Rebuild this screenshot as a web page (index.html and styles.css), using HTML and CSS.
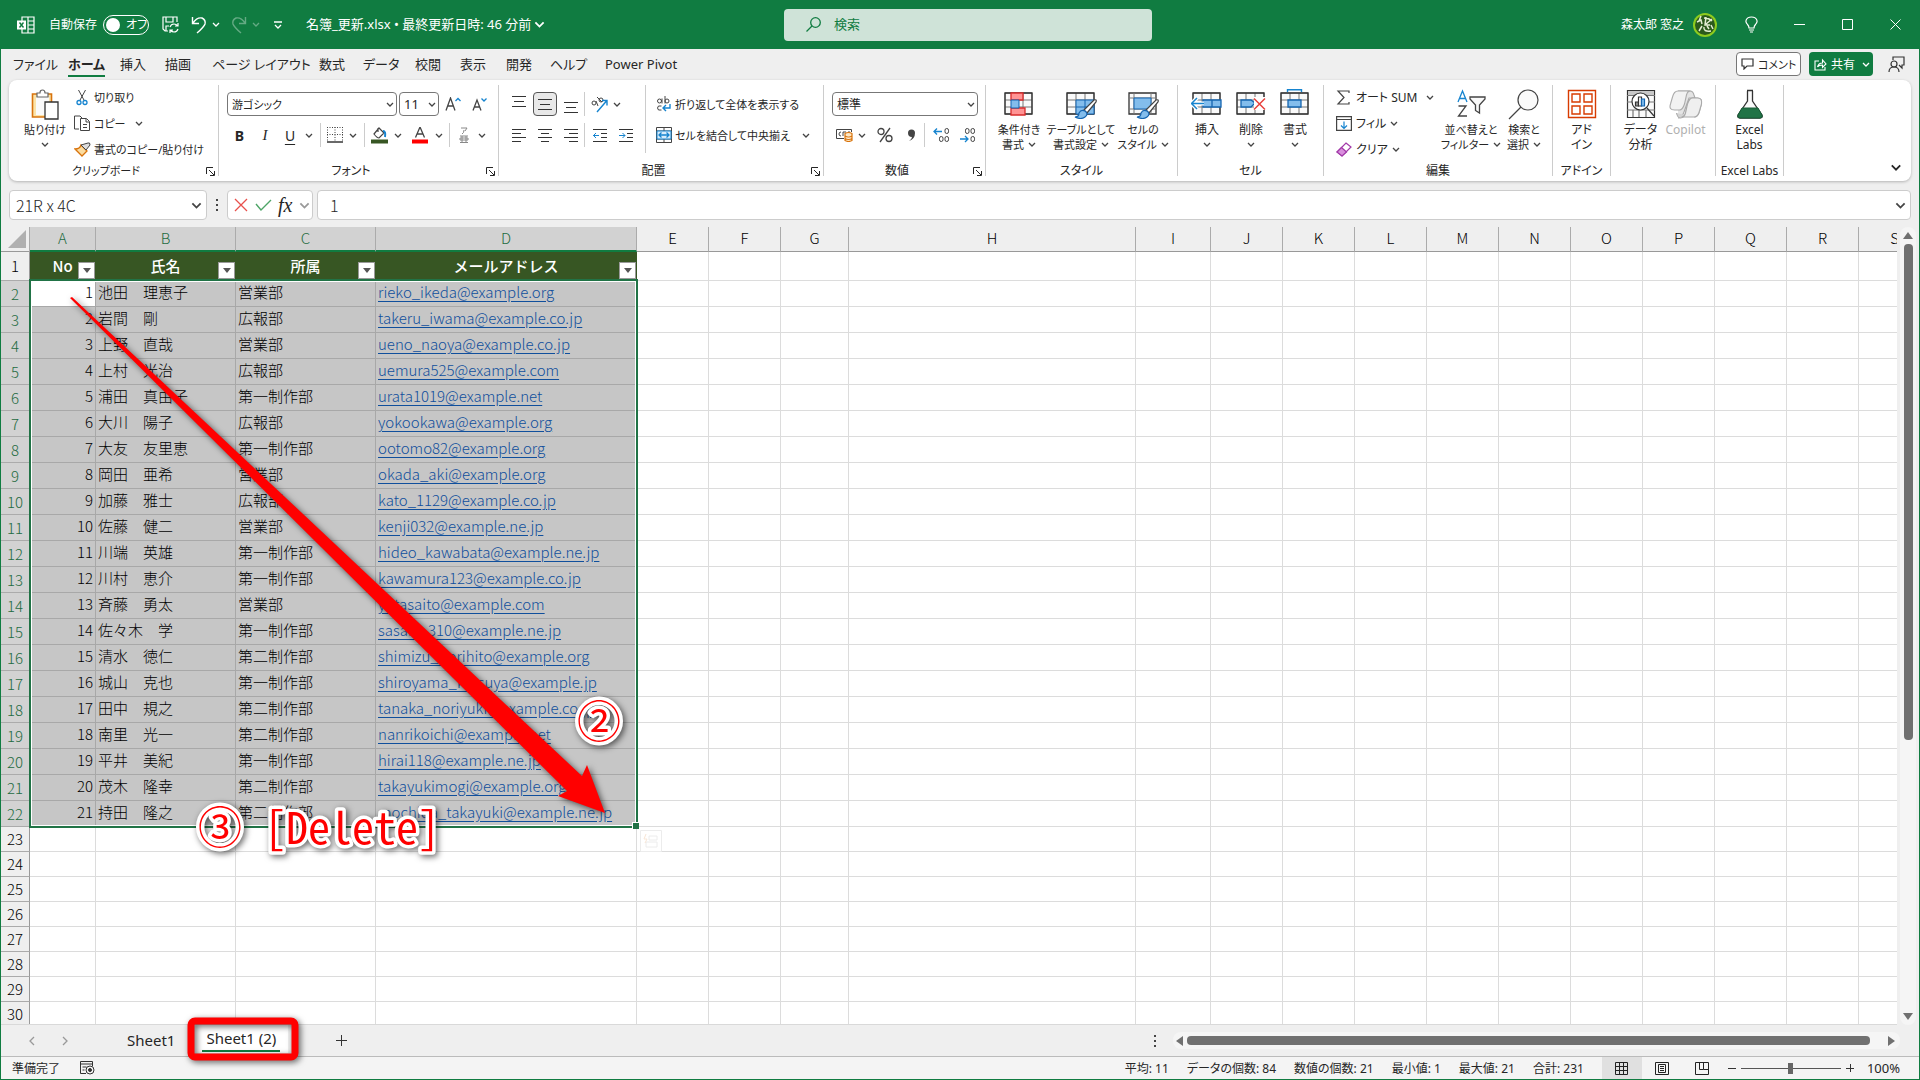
FILE: index.html
```html
<!DOCTYPE html>
<html lang="ja">
<head>
<meta charset="utf-8">
<title>名簿_更新.xlsx</title>
<link rel="stylesheet" href="styles.css">
</head>
<body>
<svg class="sprite" aria-hidden="true">
  <symbol id="chev" viewBox="0 0 8 5"><path d="M1 1l3 3 3-3" fill="none" stroke="currentColor" stroke-width="1.3"/></symbol>
  <symbol id="launch" viewBox="0 0 9 9"><path d="M.5 7V.5H7M3 3l5 5M8.500 4v4.500H4" fill="none" stroke="currentColor"/></symbol>
  <symbol id="cells" viewBox="0 0 30 24"><path d="M1 1h27v21H1zM10 1v21M19 1v21M1 8h27M1 15h27" fill="#fafafa" stroke="#777"/><path d="M1 1h27v21H1z" fill="none" stroke="#333" stroke-width="1.300"/></symbol>
  <symbol id="brush" viewBox="0 0 24 20"><path d="M10 11L20 1q3-1 2 2l-9 11z" fill="#fff" stroke="#444" stroke-width="1.200"/><path d="M1 18q4 0 4-4 2-4 6-2 4 3 0 6-4 3-10 0z" fill="#83bdec" stroke="#1565b0" stroke-width="1.200"/></symbol>
</svg>
<div class="window">
  <header class="titlebar">
    <div class="quick">
      <svg width="18" height="18" viewBox="0 0 18 18" fill="none" stroke="#fff" stroke-width="1.200"><path d="M5 5V1h12v16H5v-4M11 1v16M11 5h6M11 9h6M11 13h6"/><path d="M0 4.500h9v9H0z" fill="#fff" stroke="none"/><path d="M2.500 6.500l4 5M6.500 6.500l-4 5" stroke="#107c41" stroke-width="1.400"/></svg>
      <label class="autosave"><span>自動保存</span><input type="checkbox" class="hidden-check"><span class="toggle"><i></i>オフ</span></label>
      <button class="qa save" aria-label="保存"><svg width="17" height="17" viewBox="0 0 17 17" fill="none" stroke="#fff" stroke-width="1.200"><path d="M6 15H3l-2-2V1h14v5M4 1v5h7V1M4 15v-5h3"/><path d="M8 11q1-3 4-3 2 0 4 2M16 7v3h-3M16 13q-1 3-4 3-2 0-4-2M8 17v-3h3"/></svg></button>
      <button class="qa undo" aria-label="元に戻す"><svg width="16" height="18" viewBox="0 0 16 18" fill="none" stroke="#fff" stroke-width="1.400"><path d="M1.500 1v6.500H8M2 7q4-6 9-5 4 2 3 6-1 3-8 9"/></svg><svg class="cv"><use href="#chev"/></svg></button>
      <button class="qa undo dim" aria-label="やり直し"><svg width="16" height="18" viewBox="0 0 16 18" fill="none" stroke="#fff" stroke-width="1.400"><path d="M14.500 1v6.500H8M14 7q-4-6-9-5-4 2-3 6 1 3 8 9"/></svg><svg class="cv"><use href="#chev"/></svg></button>
      <button class="qa" aria-label="カスタマイズ"><svg width="8" height="8" viewBox="0 0 8 8" fill="none" stroke="#fff" stroke-width="1.300"><path d="M0 1h8M1 4l3 3 3-3"/></svg></button>
      <button class="docname">名簿_更新.xlsx • 最終更新日時: 46 分前<svg class="cv wide"><use href="#chev"/></svg></button>
    </div>
    <div class="search"><svg width="15" height="15" viewBox="0 0 15 15" fill="none" stroke="#107c41" stroke-width="1.300"><circle cx="9.500" cy="5.500" r="4.800"/><path d="M6 9l-5.500 5.500"/></svg><input type="text" aria-label="検索" placeholder="検索"></div>
    <div class="account">
      <span>森太郎 窓之</span>
      <svg class="avatar" width="24" height="24" viewBox="0 0 24 24"><circle cx="12" cy="12" r="12" fill="#8ecb1e"/><circle cx="12" cy="12" r="10" fill="#2b5a1c"/><path d="M4 9l4-2 1 4M8 3l-2 5M11 5q5 0 8 3M13 4l-1 8 5 0M9 13l-3 5M11 14q-1 5 7 4M14 13l2 3M18 12l2 4M19 6l-6 5" fill="none" stroke="#e4eed4" stroke-width="1.500"/></svg>
      <button class="win bulb" aria-label="ヒント"><svg width="13" height="17" viewBox="0 0 13 17" fill="none" stroke="#fff" stroke-width="1.200"><path d="M4 12q0-2-1.500-3.500Q.5 6 1 4.500 2 1 6.500 1T12 4.500q.5 1.500-1.500 4Q9 10 9 12zM4 14h5M5 16h3"/></svg></button>
      <button class="win" aria-label="最小化"><svg width="11" height="11" stroke="#fff"><path d="M0 5.500h11"/></svg></button>
      <button class="win" aria-label="最大化"><svg width="11" height="11" fill="none" stroke="#fff"><path d="M.5.5h10v10H.5z"/></svg></button>
      <button class="win" aria-label="閉じる"><svg width="11" height="11" stroke="#fff"><path d="M.5.5l10 10M10.500.5l-10 10"/></svg></button>
    </div>
  </header>

  <nav class="tabs">
    <button>ファイル</button><button class="on">ホーム</button><button>挿入</button><button>描画</button><button>ページ レイアウト</button><button>数式</button><button>データ</button><button>校閲</button><button>表示</button><button>開発</button><button>ヘルプ</button><button>Power Pivot</button>
    <div class="tab-actions">
      <button class="comment"><svg width="13" height="12" viewBox="0 0 13 12" fill="none" stroke="#333" stroke-width="1.200"><path d="M1 1h11v7H6l-3 3V8H1z"/></svg>コメント</button>
      <button class="share"><svg width="13" height="13" viewBox="0 0 13 13" fill="none" stroke="#fff" stroke-width="1.100"><path d="M5 3H1v9h10V9M3.500 9q1-4 5-4V2L12 6 8.500 9.500V7Q5 7 3.500 9z"/></svg>共有<svg class="cv"><use href="#chev"/></svg></button>
      <button class="present" aria-label="発表者"><svg width="17" height="17" viewBox="0 0 17 17" fill="none" stroke="#333" stroke-width="1.200"><path d="M5 4V1h11v8h-2v3l-3-3"/><circle cx="6" cy="8" r="3"/><path d="M1 16q0-5 5-5t5 5"/></svg></button>
    </div>
  </nav>

  <section class="ribbon">
    <div class="group g-clip">
      <div class="body">
        <button class="big"><svg width="28" height="32" viewBox="0 0 28 32"><path d="M1.500 5h19v23h-19z" fill="#fbe3a8" stroke="#d8730c" stroke-width="1.600"/><path d="M5 8h13v18H5z" fill="#fafafa"/><path d="M6 8V4h3q0-3 2.500-3T14 4h3v4z" fill="#fff" stroke="#666" stroke-width="1.200"/><path d="M14 13h13v17H14z" fill="#fff" stroke="#333" stroke-width="1.300"/></svg><span>貼り付け</span><svg class="cv"><use href="#chev"/></svg></button>
        <div class="stack">
          <button><svg width="12" height="17" viewBox="0 0 12 17" fill="none" stroke="#444"><path d="M2 1l6 11M9 1L3 12"/><circle cx="2.500" cy="13.500" r="2" stroke="#1684cf" stroke-width="1.300"/><circle cx="8.500" cy="13.500" r="2" stroke="#1684cf" stroke-width="1.300"/></svg>切り取り</button>
          <button><svg width="17" height="17" viewBox="0 0 17 17" fill="#fff" stroke="#444"><path d="M5 14H.5v-13H6l2 2"/><path d="M6.500 3.500h6l3 3v9h-9zM12 4v3h3M9 9.500h4M9 12.500h4"/></svg>コピー<svg class="cv"><use href="#chev"/></svg></button>
          <button><svg width="17" height="16" viewBox="0 0 17 16"><path d="M1 7l7 7 5-5-6-6q-1 4-6 4z" fill="#fbdca0" stroke="#d8730c" stroke-width="1.300"/><path d="M7 3l5 5 4-5q0-3-2-2z" fill="#ddd" stroke="#444"/></svg>書式のコピー/貼り付け</button>
        </div>
      </div>
      <footer class="has-launch">クリップボード<button aria-label="詳細"><svg><use href="#launch"/></svg></button></footer>
    </div>
    <div class="group g-font">
      <div class="body rows">
        <div class="line">
          <span class="sel w-font"><select aria-label="フォント"><option>游ゴシック</option></select><svg class="cv"><use href="#chev"/></svg></span>
          <span class="sel w-size"><select aria-label="サイズ"><option>11</option></select><svg class="cv"><use href="#chev"/></svg></span>
          <button class="grow" aria-label="拡大"><svg width="16" height="14" viewBox="0 0 16 14" fill="none" stroke="#444" stroke-width="1.300"><path d="M1 13.500L5.500 1 10 13.500M2.500 9h6"/><path d="M10.500 4L13 1.500 15.500 4" stroke="#1684cf"/></svg></button>
          <button class="grow" aria-label="縮小"><svg width="15" height="14" viewBox="0 0 15 14" fill="none" stroke="#444" stroke-width="1.300"><path d="M1 13.500L5 3l4 10.500M2.500 10h5"/><path d="M9.500 1.500L12 4l2.500-2.500" stroke="#1684cf"/></svg></button>
        </div>
        <div class="line font-line">
          <button class="glyph b">B</button><button class="glyph i">I</button><button class="glyph u">U</button><svg class="cv"><use href="#chev"/></svg><hr>
          <svg width="16" height="16" viewBox="0 0 16 16" fill="none" stroke="#444"><path d="M.5 0v15M15.500 0v15M8 0v15M0 .5h16M0 7.500h16" stroke-dasharray="1 1.500"/><path d="M0 15h16" stroke-width="1.600"/></svg><svg class="cv"><use href="#chev"/></svg><hr>
          <svg width="17" height="17" viewBox="0 0 17 17" fill="none" stroke="#444" stroke-width="1.200"><path d="M3 7l5-6 5 5-5 5q-2 0-5-4zM7 5V1"/><path d="M12 4q3 0 2 6" stroke="#1684cf" stroke-width="2"/><path d="M0 14.500h17" stroke="#375623" stroke-width="4"/></svg><svg class="cv"><use href="#chev"/></svg>
          <svg width="16" height="17" viewBox="0 0 16 17" fill="none" stroke="#444" stroke-width="1.300"><path d="M3.500 10.500L8 0l4.500 10.500M5 7h6"/><path d="M0 14.500h16" stroke="#f00" stroke-width="4"/></svg><svg class="cv"><use href="#chev"/></svg><hr>
          <svg width="10" height="17" viewBox="0 0 10 17" fill="none" stroke="#888"><path d="M2 1h6L6 4M5 3q0 3-2 4M1 9h8M1 15.500h8M3 9v6M7 9v6M1 11h8v2H1z"/></svg><svg class="cv"><use href="#chev"/></svg>
        </div>
      </div>
      <footer class="has-launch">フォント<button aria-label="詳細"><svg><use href="#launch"/></svg></button></footer>
    </div>
    <div class="group g-align">
      <div class="body">
        <div class="rows left">
          <div class="line align-line orient">
            <svg class="bars"><path d="M0 3.500h14M2 8.500h10M0 13.500h14" transform="translate(0 -3)"/></svg>
            <button class="pressed" aria-label="上下中央"><svg class="bars"><path d="M0 3.500h14M2 8.500h10M0 13.500h14"/></svg></button>
            <svg class="bars"><path d="M0 3.500h14M2 8.500h10M0 13.500h14" transform="translate(0 3)"/></svg><hr>
            <svg width="17" height="17" viewBox="0 0 17 17" fill="none" stroke="#444"><circle cx="3" cy="7" r="2"/><path d="M5 5l2 5"/><path d="M6 1l5 5"/><circle cx="10" cy="4" r="2"/><path d="M6 16L15.500 5M11 4.500h5v5" stroke="#1684cf" stroke-width="1.400"/></svg><svg class="cv"><use href="#chev"/></svg>
          </div>
          <div class="line align-line">
            <svg class="bars"><path d="M0 2.500h14M0 6.500h9M0 10.500h14M0 14.500h9"/></svg>
            <svg class="bars"><path d="M0 2.500h14M3 6.500h8M0 10.500h14M3 14.500h8"/></svg>
            <svg class="bars"><path d="M0 2.500h14M5 6.500h9M0 10.500h14M5 14.500h9"/></svg><hr>
            <svg class="bars"><path d="M0 2.500h14M8 6.500h6M8 10.500h6M0 14.500h14"/><path d="M0 8.500h6M3 6L.500 8.500 3 11" stroke="#1684cf"/></svg>
            <svg class="bars"><path d="M0 2.500h14M8 6.500h6M8 10.500h6M0 14.500h14"/><path d="M0 8.500h6M3.500 6L6 8.500 3.500 11" stroke="#1684cf"/></svg>
          </div>
        </div>
        <div class="rows wraps">
          <button><svg width="15" height="16" viewBox="0 0 15 16" fill="none" stroke="#444"><circle cx="3" cy="5" r="2"/><path d="M5.500 2.500v5M8.500 0v7.500M5 10q-4-1-4 2t4 2"/><circle cx="10.500" cy="5" r="2"/><path d="M13.500 8v4H7M9.500 9L6.500 12l3 3" stroke="#1684cf" stroke-width="1.400"/></svg>折り返して全体を表示する</button>
          <button><svg width="16" height="16" viewBox="0 0 16 16" fill="none" stroke="#444"><path d="M.5.5h15v15H.5zM.5 4h15M.5 12h15M8 0v4M8 12v4"/><path d="M1 4h14v8H1z" fill="#d8ecfa" stroke="#1684cf"/><path d="M3 8h10M5.500 5.500L3 8l2.500 2.500M10.500 5.500L13 8l-2.500 2.500" stroke="#1684cf" stroke-width="1.300"/></svg>セルを結合して中央揃え<svg class="cv"><use href="#chev"/></svg></button>
        </div>
      </div>
      <footer class="has-launch">配置<button aria-label="詳細"><svg><use href="#launch"/></svg></button></footer>
    </div>
    <div class="group g-num">
      <div class="body rows">
        <div class="line"><span class="sel w-num"><select aria-label="表示形式"><option>標準</option></select><svg class="cv"><use href="#chev"/></svg></span></div>
        <div class="line num-line">
          <svg width="17" height="14" viewBox="0 0 17 14" fill="none" stroke="#444"><path d="M8 10.500H.5v-9h15V4M5 4Q3 4 3 6t2 2M7 8V4h3M12 4h2"/><path d="M9 5.500q3.500-2 7 0v7q-3.500 2-7 0zM9 8q3.500 2 7 0M9 10.500q3.500 2 7 0" fill="#fde7c4" stroke="#d8730c" stroke-width="1.200"/></svg><svg class="cv"><use href="#chev"/></svg>
          <svg width="16" height="16" viewBox="0 0 16 16" fill="none" stroke="#444" stroke-width="1.300"><circle cx="4" cy="4.500" r="3"/><circle cx="12" cy="11.500" r="3"/><path d="M13 1L3 15"/></svg>
          <svg width="9" height="14" viewBox="0 0 9 14"><path d="M2 13q3-2 3-4-4 0-4-4 0-3.500 3.500-3.500T8 5q0 6-6 8z" fill="#444"/></svg><hr>
          <svg width="17" height="17" viewBox="0 0 17 17" fill="none" stroke="#444"><rect x="12" y="1.500" width="3.500" height="5" rx="1.700"/><rect x="6.500" y="9.500" width="3.500" height="5" rx="1.700"/><rect x="12" y="9.500" width="3.500" height="5" rx="1.700"/><path d="M9 4.500H1M4 1.500L1 4.500l3 3" stroke="#1684cf" stroke-width="1.300"/></svg>
          <svg width="17" height="17" viewBox="0 0 17 17" fill="none" stroke="#444"><rect x="6.500" y="1.500" width="3.500" height="5" rx="1.700"/><rect x="12" y="1.500" width="3.500" height="5" rx="1.700"/><rect x="12" y="9.500" width="3.500" height="5" rx="1.700"/><path d="M1 12h8M6 9l3 3-3 3" stroke="#1684cf" stroke-width="1.300"/></svg>
        </div>
      </div>
      <footer class="has-launch">数値<button aria-label="詳細"><svg><use href="#launch"/></svg></button></footer>
    </div>
    <div class="group g-style">
      <div class="body">
        <button class="big"><svg width="32" height="32" viewBox="0 0 32 32"><use href="#cells" x="1" y="3" width="30" height="24"/><path d="M8 4h12v7H8zM8 19h14v7H8z" fill="#ff9494" stroke="#d92c2c" stroke-width="1.300"/><path d="M8 11h8v8H8z" fill="#83bdec" stroke="#1565b0"/></svg><span>条件付き<br>書式<svg class="cv"><use href="#chev"/></svg></span></button>
        <button class="big"><svg width="32" height="32" viewBox="0 0 32 32"><use href="#cells" x="1" y="3" width="30" height="24"/><path d="M11 11h18v14H11zM20 11v14M11 18h18" fill="#83bdec" stroke="#1565b0"/><use href="#brush" x="9" y="10" width="24" height="20"/></svg><span>テーブルとして<br>書式設定<svg class="cv"><use href="#chev"/></svg></span></button>
        <button class="big"><svg width="32" height="32" viewBox="0 0 32 32"><path d="M2 4h27v21H2z" fill="#fafafa" stroke="#333" stroke-width="1.300"/><path d="M7 4v21M24 4v21M2 9h27M2 20h27" stroke="#777" fill="none"/><path d="M7 9h17v11H7z" fill="#83bdec" stroke="#1565b0"/><use href="#brush" x="9" y="10" width="24" height="20"/></svg><span>セルの<br>スタイル<svg class="cv"><use href="#chev"/></svg></span></button>
      </div>
      <footer>スタイル</footer>
    </div>
    <div class="group g-cell">
      <div class="body">
        <button class="big"><svg width="32" height="32" viewBox="0 0 32 32"><use href="#cells" x="1" y="3" width="30" height="24"/><path d="M12 11h18v7H12zM21 11v7" fill="#83bdec" stroke="#1565b0" stroke-width="1.300"/><path d="M0 14.500h13M6 9L.5 14.500 6 20" fill="none" stroke="#fff" stroke-width="4"/><path d="M0 14.500h13M6 9L.5 14.500 6 20" fill="none" stroke="#1684cf" stroke-width="1.500"/></svg><span>挿入</span><svg class="cv"><use href="#chev"/></svg></button>
        <button class="big"><svg width="32" height="32" viewBox="0 0 32 32"><use href="#cells" x="1" y="3" width="30" height="24"/><path d="M6 11h10l4 3-4 4H6z" fill="#83bdec" stroke="#1565b0" stroke-width="1.300"/><path d="M19 8h12v13H19z" fill="#fff"/><path d="M19 9.500l11 11M30 9.500l-11 11" fill="none" stroke="#e8403c" stroke-width="1.500"/></svg><span>削除</span><svg class="cv"><use href="#chev"/></svg></button>
        <button class="big"><svg width="32" height="32" viewBox="0 0 32 32"><use href="#cells" x="1" y="3" width="30" height="24"/><path d="M9 11h13v7H9z" fill="#83bdec" stroke="#1565b0" stroke-width="1.300"/><path d="M8 .7h15M8.500 0v3M22.500 0v3" stroke="#1684cf" stroke-width="1.400"/></svg><span>書式</span><svg class="cv"><use href="#chev"/></svg></button>
      </div>
      <footer>セル</footer>
    </div>
    <div class="group g-edit">
      <div class="body">
        <div class="stack">
          <button><svg width="16" height="15" viewBox="0 0 16 15" fill="none" stroke="#444" stroke-width="1.200"><path d="M13 3V1H2l6 6.500L2 14h11v-2"/></svg>オート SUM<svg class="cv"><use href="#chev"/></svg></button>
          <button><svg width="16" height="15" viewBox="0 0 16 15" fill="none" stroke="#444" stroke-width="1.200"><path d="M.6.600h14.800v13.800H.6zM.6 3.500h14.800"/><path d="M8 5.500v7M5 9.500l3 3 3-3" stroke="#1684cf"/></svg>フィル<svg class="cv near"><use href="#chev"/></svg></button>
          <button><svg width="16" height="15" viewBox="0 0 16 15" fill="none" stroke="#a239a8" stroke-width="1.200"><path d="M10 1l5 4-9 9-5-4z" fill="#fff"/><path d="M5.500 5.500l5 4.500L6 14l-5-4z" fill="#d98fdd"/></svg>クリア<svg class="cv near"><use href="#chev"/></svg></button>
        </div>
        <button class="big sort"><svg width="32" height="32" viewBox="0 0 32 32" fill="none" stroke-width="1.300"><path d="M3 13L7.500 2 12 13M4.500 9.500h6" stroke="#1684cf"/><path d="M3.500 17H11L3.500 27H12" stroke="#444"/><path d="M15 8h15v2l-5.500 6v8l-4-2.500V16L15 10z" fill="#fafafa" stroke="#444"/></svg><span>並べ替えと<br>フィルター<svg class="cv"><use href="#chev"/></svg></span></button>
        <button class="big find"><svg width="32" height="32" viewBox="0 0 32 32" fill="#fafafa" stroke="#444" stroke-width="1.200"><circle cx="20" cy="11" r="10"/><path d="M13 18L1 30"/></svg><span>検索と<br>選択<svg class="cv"><use href="#chev"/></svg></span></button>
      </div>
      <footer>編集</footer>
    </div>
    <div class="group g-add">
      <div class="body"><button class="big"><svg width="32" height="32" viewBox="0 0 32 32" fill="none" stroke="#d83b01" stroke-width="1.400"><path d="M2.500 1.500h27v27h-27zM6 5h8v8H6zM18 5h8v8h-8zM6 17h8v8H6zM18 17h8v8h-8z"/></svg><span>アド<br>イン</span></button></div>
      <footer>アドイン</footer>
    </div>
    <div class="group g-data">
      <div class="body">
        <button class="big"><svg width="32" height="32" viewBox="0 0 32 32" fill="none" stroke="#333" stroke-width="1.200"><path d="M2.500 1.500h27v27h-27z" fill="#fafafa"/><path d="M3 2h26v4H3z" fill="#c8c8c8" stroke="none"/><path d="M2 6.500h28M2 13h28M2 21h28M8 21v7M14 21v7M21 21v7" stroke="#777"/><circle cx="15.500" cy="12.500" r="8.500" fill="#fff"/><path d="M22 19l7 8"/><path d="M10.500 13h3v4h-3z" fill="#999"/><path d="M13.500 8h3v9h-3z" fill="#fff"/><path d="M16.500 10h3v7h-3z" fill="#83bdec" stroke="#1565b0"/></svg><span>データ<br>分析</span></button>
        <button class="big off" disabled><svg width="34" height="32" viewBox="0 0 34 32" fill="#e4e4e4" stroke="#aaa" stroke-width="1.100"><path d="M9 2h12q3 0 4 4l1 3h-6l-5 14q-2 6-6 6"/><path d="M9 2Q5 2 3.500 8L1.500 15q-2 6 4 6h5q3 0 5-6l2-9q1-4 4-4z" fill="#f2f2f2"/><path d="M25 28q4 0 5.500-6l2-7q1-6-4-6h-5q-3 0-5 6l-2 9q-1 5-5 5-3 0-4-5" fill="#d4d4d4"/><path d="M25 28q4 0 5.500-6l2-7q1-6-4-6h-5q-3 0-5 6l-2 9q-1 4-4 4z" fill="#efefef"/></svg><span>Copilot</span></button>
      </div>
      <footer></footer>
    </div>
    <div class="group g-labs">
      <div class="body"><button class="big"><svg width="32" height="32" viewBox="0 0 32 32"><path d="M13 1.500h6M13.500 2v10L4 26q-1 3 2 3h20q3 0 2-3L18.500 12V2" fill="#fafafa" stroke="#333" stroke-width="1.300"/><path d="M8 19h16l4 7q1 3-2 3H6q-3 0-2-3z" fill="#217346" stroke="#185c37"/></svg><span>Excel<br>Labs</span></button></div>
      <footer>Excel Labs</footer>
    </div>
    <button class="collapse" aria-label="リボンを折りたたむ"><svg width="12" height="7" viewBox="0 0 8 5"><use href="#chev"/></svg></button>
  </section>

  <section class="formula">
    <div class="namebox"><input type="text" aria-label="名前ボックス" value="21R x 4C"><svg class="cv wide"><use href="#chev"/></svg></div>
    <span class="dots"><i></i><i></i><i></i></span>
    <div class="fx">
      <button aria-label="キャンセル"><svg width="14" height="14" stroke="#e8504c" stroke-width="1.300"><path d="M1 1l12 12M13 1L1 13"/></svg></button>
      <button aria-label="入力"><svg width="17" height="12" fill="none" stroke="#4ea567" stroke-width="1.400"><path d="M1 5l5 6L16 1"/></svg></button>
      <button class="fn">fx</button><svg class="cv wide grey"><use href="#chev"/></svg>
    </div>
    <div class="fbox"><input type="text" aria-label="数式バー" value="1"><svg class="cv wide"><use href="#chev"/></svg></div>
  </section>

  <main class="sheet">
    <div class="grid">
      <table>
        <colgroup id="cols"></colgroup>
        <thead id="head"></thead>
        <tbody id="rows"></tbody>
      </table>
      <div class="selection"></div>
      <svg class="quickan" width="22" height="22" fill="none" stroke="#ececec"><path d="M.5.5h21v21H.5zM9 6h8v4H9zM6 12h11v5H6z"/><path d="M6 4l-2 5h3l-2 4" stroke="#f8e6d6"/></svg>
    </div>
    <div class="vscroll"><i class="up"></i><span class="thumb"></span><i class="down"></i></div>
  </main>

  <section class="sheetbar">
    <button class="nav" aria-label="前へ"><svg width="6" height="10" fill="none" stroke="#999" stroke-width="1.300"><path d="M5 1L1 5l4 4"/></svg></button>
    <button class="nav" aria-label="次へ"><svg width="6" height="10" fill="none" stroke="#999" stroke-width="1.300"><path d="M1 1l4 4-4 4"/></svg></button>
    <button class="tab">Sheet1</button>
    <button class="tab current"><span>Sheet1 (2)</span></button>
    <button class="plus" aria-label="新しいシート"><svg width="11" height="11" stroke="#333"><path d="M0 5.500h11M5.500 0v11"/></svg></button>
    <div class="hscroll"><span class="dots"><i></i><i></i><i></i></span><div class="track"><i class="lt"></i><span class="thumb"></span><i class="rt"></i></div></div>
  </section>

  <footer class="status">
    <span class="ready">準備完了</span>
    <svg width="15" height="14" viewBox="0 0 15 14" fill="none" stroke="#333"><path d="M6 12.500H.5V.5h12V5M.5 3h12M2.500 6h4M2.500 9h2"/><circle cx="10" cy="9" r="4"/><circle cx="10" cy="9" r="1.500" fill="#333"/></svg>
    <div class="stats"><span>平均: 11</span><span>データの個数: 84</span><span>数値の個数: 21</span><span>最小値: 1</span><span>最大値: 21</span><span>合計: 231</span></div>
    <button class="view on" aria-label="標準"><svg width="13" height="13" fill="none" stroke="#222"><path d="M.5.5h12v12H.5zM4.500 0v13M8.500 0v13M0 4.500h13M0 8.500h13"/></svg></button>
    <button class="view" aria-label="ページ レイアウト"><svg width="14" height="13" fill="none" stroke="#222"><path d="M.5.5h13v12H.5zM3.500 2.500h7v8h-7zM5 4.500h4M5 6.500h4M5 8.500h4"/></svg></button>
    <button class="view" aria-label="改ページ"><svg width="14" height="13" fill="none" stroke="#222"><path d="M.5.5h13v12H.5zM4.500 0v7.500h4M8.500 0v7.500h5"/></svg></button>
    <div class="zoom"><button aria-label="縮小"><svg width="8" height="8" stroke="#333"><path d="M0 4.500h8"/></svg></button><input type="range" min="0" max="100" value="50" aria-label="ズーム"><button aria-label="拡大"><svg width="8" height="8" stroke="#333"><path d="M0 4.500h8M4.500 0v8"/></svg></button><span class="pct">100%</span></div>
  </footer>

  <svg class="marks" aria-hidden="true">
    <g class="shade">
      <path d="M70 298l2-1L582 776l5-11 18 48-47-17 9-5z" fill="#f00"/>
      <rect x="191" y="1021" width="104" height="36" rx="4" fill="none" stroke="#f00" stroke-width="7"/>
    </g>
    <g class="shade callout">
      <text x="577" y="738">②</text>
      <text x="198" y="844">③</text>
      <text x="264" y="844">[Delete]</text>
    </g>
  </svg>
</div>
<script src="script.js"></script>
</body>
</html>
```
FILE: styles.css
```css
* { box-sizing: border-box; }
body {
  margin: 0;
  font-family: "Noto Sans", "Noto Sans CJK JP", sans-serif;
  font-size: 12px;
  line-height: 15px;
  color: #262626;
  font-feature-settings: "palt";
}
button, input, select { font: inherit; font-feature-settings: inherit; color: inherit; background: none; border: 0; padding: 0; margin: 0; }
button { display: flex; align-items: center; white-space: nowrap; }
svg { flex: none; display: block; }
.sprite { position: absolute; width: 0; height: 0; }
.cv { width: 8px; height: 5px; color: #444; }
.cv.wide { width: 11px; height: 7px; }

.window {
  position: relative;
  display: flex;
  flex-direction: column;
  height: 100vh;
  overflow: hidden;
  background: #efefef;
  border: 1px solid #107c41;
  border-top: 0;
}

/* title bar */
.titlebar {
  flex: none;
  display: grid;
  grid-template-columns: 1fr 368px 1fr;
  align-items: center;
  height: 49px;
  padding-left: 16px;
  background: #107c41;
  color: #fff;
}
.titlebar .cv { color: #fff; }
.quick { display: flex; align-items: center; }
.autosave { display: flex; align-items: center; gap: 6px; margin: 0 13px 0 14px; }
.hidden-check { position: absolute; opacity: 0; }
.toggle { display: flex; align-items: center; gap: 6px; width: 46px; height: 20px; padding-left: 2px; border: 1px solid #fff; border-radius: 10px; white-space: nowrap; }
.toggle i { flex: none; width: 14px; height: 14px; border-radius: 50%; background: #fff; }
.qa { gap: 5px; }
.save { margin-right: 12px; }
.undo { margin-right: 11px; }
.dim { opacity: .35; margin-right: 14px; }
.docname { margin-left: 24px; gap: 3px; font-size: 13px; }
.search { display: flex; align-items: center; gap: 13px; height: 32px; padding-left: 22px; background: #cfe3d8; border-radius: 4px; }
.search input { flex: 1; font-size: 13px; }
.search input::placeholder { color: #107c41; opacity: 1; }
.account { display: flex; align-items: center; justify-content: flex-end; }
.avatar { margin: 0 17px 0 9px; }
.win { width: 48px; height: 48px; justify-content: center; }
.win.bulb { width: 34px; margin-right: 7px; }

/* ribbon tabs */
.tabs {
  flex: none;
  display: grid;
  grid-template-columns: 55px 52px 45px 47px 107px 44px 52px 45px 46px 44px 55px 1fr auto;
  height: 31px;
  padding: 3px 8px 0 12px;
  font-size: 13px;
}
.tabs > button { justify-self: start; height: 25px; padding-top: 2px; border-bottom: 2px solid transparent; }
.tabs > .on { border-color: #107c41; font-weight: 700; }
.tab-actions { display: flex; align-items: center; height: 24px; }
.comment, .share { height: 24px; border-radius: 4px; gap: 4px; font-size: 12px; }
.comment { width: 65px; padding-left: 4px; margin-right: 8px; border: 1px solid #777; background: #fff; font-size: 11px; }
.share { width: 64px; padding-left: 5px; margin-right: 15px; background: #107c41; color: #fff; }
.share .cv { color: #fff; margin-left: 3px; }
.present { margin-right: 6px; }

/* ribbon */
.ribbon {
  flex: none;
  display: flex;
  height: 101px;
  margin: 0 8px;
  padding: 5px 0;
  background: #fff;
  border-radius: 8px;
  box-shadow: 0 1px 3px rgba(0, 0, 0, .25);
}
.group { flex: none; display: flex; flex-direction: column; border-right: 1px solid #ccc; }
.body { flex: none; display: flex; height: 77px; }
.group > footer { position: relative; height: 14px; line-height: 18px; text-align: center; white-space: nowrap; }
.has-launch { padding-right: 15px; }
.has-launch button { position: absolute; right: 3px; top: 5px; }
.has-launch svg { width: 9px; height: 9px; }
.g-clip { width: 210px; font-size: 11px; }
.g-font { width: 280px; }
.g-align { width: 325px; }
.g-num { width: 162px; }
.g-style { width: 192px; }
.g-cell { width: 146px; }
.g-edit { width: 229px; }
.g-add { width: 58px; }
.g-data { width: 105px; }
.g-labs { width: 68px; }
.big { flex-direction: column; justify-content: flex-start; padding-top: 4px; line-height: 15px; }
.big > span { margin-top: 1px; }
.big > span .cv { display: inline-block; margin: 0 0 2px 4px; }
.big > .cv { margin-top: 5px; }
.g-style .big, .g-edit .big { font-size: 11px; }
.g-clip .big { width: 64px; padding-left: 8px; }
.stack { display: flex; flex-direction: column; justify-content: space-between; height: 77px; }
.stack button { height: 25px; }
.stack button > svg:first-child { margin-right: 4px; }
.stack .cv { margin-left: 9px; }
.stack .cv.near { margin-left: 4px; }
.g-clip .stack button > svg:first-child { width: 17px; margin-right: 3px; }
.g-clip .stack { padding-left: 1px; }
.rows { display: flex; flex-direction: column; gap: 7px; padding-top: 7px; }
.line { display: flex; align-items: center; height: 24px; }
.line hr { width: 1px; height: 24px; margin: 0; border: 0; background: #ccc; }
.g-font .rows, .g-num .rows { padding-left: 8px; }
.sel { position: relative; height: 24px; }
.sel select { appearance: none; width: 100%; height: 24px; padding: 0 4px; border: 1px solid #777; border-radius: 4px; background: #fff; }
.sel .cv { position: absolute; right: 3px; top: 10px; }
.w-font { width: 170px; margin-right: 2px; }
.w-font select { font-size: 11px; }
.w-size { width: 40px; }
.w-size select { font-size: 13px; }
.w-num { width: 146px; }
.grow { margin-left: 6px; height: 16px; }
.grow + .grow { margin-left: 11px; }
.font-line { display: grid; grid-template-columns: 25px 26px 24px 14px 8px 21px 16px 6px 24px 13px 31px 7px 14px 16px 20px; justify-items: center; }
.glyph { font-size: 14px; }
.b { font-weight: 700; }
.i { font-family: "Liberation Serif", serif; font-style: italic; font-size: 15px; }
.u { text-decoration: underline; text-underline-offset: 3px; }
.bars { width: 14px; height: 17px; fill: none; stroke: #333; }
.g-align .left { width: 146px; padding-left: 7px; }
.align-line { display: grid; grid-template-columns: 26px 26px 26px 1px 30px 22px; justify-items: center; }
.orient { grid-template-columns: 26px 26px 26px 1px 28px 8px; }
.pressed { width: 24px; height: 24px; justify-content: center; background: #e8e8e8; border: 1px solid #555; border-radius: 4px; }
.wraps { padding-left: 10px; border-left: 1px solid #ccc; height: 68px; font-size: 11px; }
.wraps button { height: 24px; }
.wraps button > svg:first-child { width: 16px; margin-right: 3px; }
.wraps .cv { margin-left: 12px; }
.num-line { display: grid; grid-template-columns: 24px 12px 34px 18px 8px 26px 26px; justify-items: center; }
.g-style .body { padding-left: 4px; }
.g-style .big { width: 58px; }
.g-style .big:nth-child(2) { width: 66px; }
.g-cell .body { padding-left: 7px; }
.g-cell .big { width: 44px; }
.g-edit .stack { width: 116px; padding-left: 12px; }
.g-edit .big { width: 62px; }
.g-edit .find { width: 44px; }
.g-add .big, .g-labs .big { width: 100%; }
.g-data .body { padding-left: 7px; }
.g-data .big { width: 45px; }
.off { color: #b0b0b0; }
.collapse { margin: auto 9px 5px auto; }

/* formula bar */
.formula { flex: none; display: flex; height: 30px; margin: 9px 8px 7px; }
.namebox, .fx, .fbox { display: flex; align-items: center; background: #fff; border: 1px solid #ccc; border-radius: 4px; }
.namebox, .fbox { padding: 0 4px 0 6px; font: 300 16px/20px "Noto Sans CJK JP", sans-serif; font-feature-settings: normal; }
.namebox { width: 198px; }
.namebox input, .fbox input { flex: 1; min-width: 0; }
.fbox { flex: 1; padding-left: 12px; }
.dots { display: flex; flex-direction: column; align-items: center; justify-content: center; gap: 3px; width: 20px; }
.dots i { width: 2px; height: 2px; background: #444; }
.fx { width: 86px; padding: 0 2px 0 6px; margin-right: 4px; justify-content: space-between; }
.fn { font: italic 20px "Liberation Serif", serif; }
.grey { color: #999; }

/* worksheet */
.sheet { flex: 1; min-height: 0; display: flex; }
.grid { position: relative; flex: 1; min-width: 0; overflow: hidden; background: #fff; border-bottom: 1px solid #d9d9d9; }
table { border-collapse: separate; border-spacing: 0; table-layout: fixed; width: 1930px; font: 300 15px/20px "Noto Sans CJK JP", sans-serif; font-feature-settings: normal; color: #000; }
th, td { padding: 0 2px 2px; overflow: hidden; white-space: nowrap; border-right: 1px solid #dcdcdc; border-bottom: 1px solid #dcdcdc; text-align: left; }
thead th, tbody th { font-weight: 300; text-align: center; background: #efefef; }
thead th { height: 25px; border-color: #ababab #ababab #999; }
thead th.sel-h { background: #d2d2d2; color: #1e6b41; border-bottom: 2px solid #107c41; }
tbody th { height: 25px; padding: 0; border-color: #ababab; border-right-color: #999; }
tbody th.sel-h { background: #d2d2d2; color: #1e6b41; }
.corner { position: relative; }
.corner::after { content: ""; position: absolute; right: 3px; bottom: 3px; border: 9px solid transparent; border-right-color: #b0b0b0; border-bottom-color: #b0b0b0; }
.title th, .title td { height: 29px; }
.title td.head { position: relative; padding-bottom: 0; background: #375623; color: #fff; font-weight: 500; text-align: center; border-right-color: #375623; }
.filter { position: absolute; right: 0; bottom: 1px; width: 17px; height: 17px; justify-content: center; background: #fff; border: 1px solid #9a9a9a; }
.filter::after { content: ""; border: 4px solid transparent; border-top: 5px solid #555; border-bottom: 0; }
.data th, .data td { height: 26px; }
.data .cell { padding-bottom: 4px; background: #c6c6c6; border-color: #a8a8a8; }
.data .active { background: #fff; }
.num { text-align: right; }
.data a { color: #104f9c; text-underline-offset: 3px; }
.selection { position: absolute; left: 28px; top: 52px; width: 609px; height: 549px; border: 2px solid #217346; box-shadow: inset 0 0 0 1px #fff; }
.selection::after { content: ""; position: absolute; right: -3px; bottom: -3px; width: 6px; height: 6px; background: #217346; border: 1px solid #fff; border-width: 1px 0 0 1px; }
.quickan { position: absolute; left: 639px; top: 603px; }
.vscroll { flex: none; display: flex; flex-direction: column; align-items: center; width: 16px; margin: 0 3px; padding: 5px 0; background: #f5f5f5; border-radius: 8px; }
.thumb { background: #707070; border-radius: 4px; }
.vscroll .thumb { width: 9px; height: 63%; margin: 5px 0 auto; }
.up, .down { border: 5px solid transparent; }
.up { border-top: 0; border-bottom: 7px solid #707070; }
.down { border-bottom: 0; border-top: 7px solid #707070; }

/* sheet tabs */
.sheetbar { flex: none; display: flex; align-items: center; height: 32px; padding-left: 28px; font-size: 15px; font-feature-settings: normal; border-bottom: 1px solid #bbb; }
.nav { width: 33px; }
.tab { margin-left: 32px; }
.current { align-self: flex-start; height: 28px; padding: 0 8px; margin-left: 19px; background: #fff; }
.current span { padding: 0 4px; height: 25px; line-height: 22px; border-bottom: 2px solid #107c41; }
.plus { margin-left: 48px; }
.hscroll { display: flex; align-items: center; width: 753px; margin-left: auto; margin-right: 19px; }
.hscroll .dots { width: 15px; margin-right: 11px; }
.track { flex: 1; display: flex; align-items: center; gap: 4px; height: 17px; padding: 0 5px 0 3px; background: #f5f5f5; border-radius: 8px; }
.track .thumb { flex: 1; height: 9px; margin-right: 14px; }
.lt, .rt { border: 5px solid transparent; }
.lt { border-left: 0; border-right: 7px solid #707070; }
.rt { border-right: 0; border-left: 7px solid #707070; }

/* status bar */
.status { flex: none; display: flex; align-items: center; height: 22px; padding: 0 19px 0 11px; background: #f4f4f4; }
.ready { margin-right: 20px; }
.stats { display: flex; gap: 18px; margin: 0 18px 0 auto; }
.view { width: 40px; height: 22px; justify-content: center; }
.view.on { background: #e0e0e0; }
.zoom { display: flex; align-items: center; margin-left: 6px; gap: 5px; }
.zoom input { appearance: none; width: 100px; height: 1px; background: #555; }
.zoom input::-webkit-slider-thumb { appearance: none; width: 5px; height: 11px; background: #666; }
.pct { margin-left: 8px; font-size: 13px; }

/* tutorial annotations */
.marks { position: absolute; left: -1px; top: 0; width: 100%; height: 100%; pointer-events: none; }
.shade { filter: drop-shadow(2px 2px 3px rgba(0, 0, 0, .6)); }
.callout { font: 44px "Noto Sans Mono CJK JP", "Noto Sans CJK JP", monospace; fill: #f00; stroke: #fff; stroke-width: 7px; stroke-linejoin: round; paint-order: stroke; font-feature-settings: normal; }
```
FILE: script.js
```js
const widths = [29, 66, 140, 140, 261, 72, 72, 68, 287, 75, 72, 72, 72, 72, 72, 72, 72, 72, 72];
const letters = 'ABCDEFGHIJKLMNOPQRS'.split('');
const people = [
  ['池田　理恵子', '営業部', 'rieko_ikeda@example.org'],
  ['岩間　剛', '広報部', 'takeru_iwama@example.co.jp'],
  ['上野　直哉', '営業部', 'ueno_naoya@example.co.jp'],
  ['上村　光治', '広報部', 'uemura525@example.com'],
  ['浦田　真由子', '第一制作部', 'urata1019@example.net'],
  ['大川　陽子', '広報部', 'yokookawa@example.org'],
  ['大友　友里恵', '第一制作部', 'ootomo82@example.org'],
  ['岡田　亜希', '営業部', 'okada_aki@example.org'],
  ['加藤　雅士', '広報部', 'kato_1129@example.co.jp'],
  ['佐藤　健二', '営業部', 'kenji032@example.ne.jp'],
  ['川端　英雄', '第一制作部', 'hideo_kawabata@example.ne.jp'],
  ['川村　恵介', '第一制作部', 'kawamura123@example.co.jp'],
  ['斉藤　勇太', '営業部', 'yutasaito@example.com'],
  ['佐々木　学', '第一制作部', 'sasaki_310@example.ne.jp'],
  ['清水　徳仁', '第二制作部', 'shimizu_norihito@example.org'],
  ['城山　克也', '第一制作部', 'shiroyama_katsuya@example.jp'],
  ['田中　規之', '第二制作部', 'tanaka_noriyuki@example.co.jp'],
  ['南里　光一', '第二制作部', 'nanrikoichi@example.net'],
  ['平井　美紀', '第一制作部', 'hirai118@example.ne.jp'],
  ['茂木　隆幸', '第二制作部', 'takayukimogi@example.org'],
  ['持田　隆之', '第二制作部', 'mochida_takayuki@example.ne.jp']
];
document.getElementById('cols').innerHTML = widths.concat(72).map(w => `<col style="width:${w}px">`).join('');
document.getElementById('head').innerHTML = '<tr><th class="corner"></th>' +
  letters.map((l, i) => `<th class="${i < 4 ? 'sel-h' : ''}">${l}</th>`).join('') + '</tr>';
const blanks = n => '<td></td>'.repeat(n);
let html = '<tr class="title"><th>1</th>' +
  ['No', '氏名', '所属', 'メールアドレス'].map(t => `<td class="head">${t}<button class="filter" aria-label="フィルター"></button></td>`).join('') +
  blanks(15) + '</tr>';
people.forEach((p, i) => {
  html += `<tr class="data"><th class="sel-h">${i + 2}</th><td class="cell num ${i ? '' : 'active'}">${i + 1}</td>` +
    `<td class="cell">${p[0]}</td><td class="cell">${p[1]}</td><td class="cell"><a href="mailto:${p[2]}">${p[2]}</a></td>${blanks(15)}</tr>`;
});
for (let r = 23; r <= 30; r++) html += `<tr><th>${r}</th>${blanks(19)}</tr>`;
document.getElementById('rows').innerHTML = html;
```
